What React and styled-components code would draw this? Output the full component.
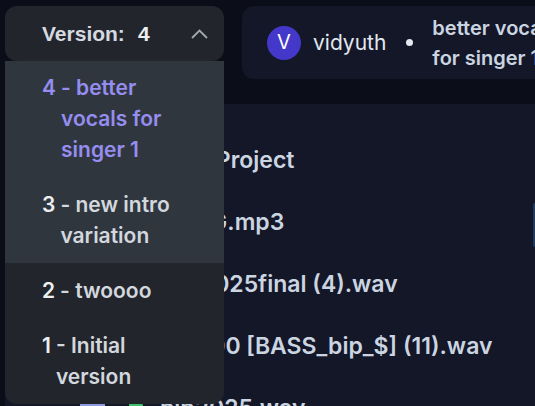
import React, { useState } from "react";
import styled, { createGlobalStyle } from "styled-components";

const GlobalStyle = createGlobalStyle`
  * {
    box-sizing: border-box;
  }
  body {
    margin: 0;
    height: 100vh;
    overflow: hidden;
    background: #0b0d18;
    color: #cbd5e1;
    font-family: Inter, "Liberation Sans", sans-serif;
  }
`;

const Page = styled.div`
  padding: 6px 0 0 5px;
`;

const TopBar = styled.header`
  display: flex;
  align-items: flex-start;
  gap: 18px;
  height: 98px;
`;

const VersionPicker = styled.div`
  position: relative;
  flex: 0 0 219px;
`;

const VersionButton = styled.button`
  display: flex;
  align-items: center;
  width: 100%;
  height: 55px;
  padding: 0 16px 0 37px;
  border: none;
  border-radius: 12px;
  background: #22262c;
  color: #d5dae1;
  font-family: "Liberation Sans", sans-serif;
  font-size: 21px;
  font-weight: 700;
  cursor: pointer;
`;

const VersionNumber = styled.span`
  margin-left: 13px;
  color: #eceef1;
`;

const Chevron = styled.svg`
  width: 17px;
  height: 10px;
  margin-left: auto;
`;

const VersionMenu = styled.ul`
  position: absolute;
  top: 100%;
  left: 0;
  z-index: 1;
  width: 100%;
  margin: 0;
  padding: 0;
  overflow: hidden;
  border-radius: 0 0 12px 12px;
  background: #22262c;
  list-style: none;
`;

const VersionOption = styled.button`
  display: flex;
  width: 100%;
  padding: 12px 40px 12px 37px;
  border: none;
  background: ${(props) => (props.$highlighted ? "#30363d" : "transparent")};
  color: ${(props) => (props.$current ? "#958df0" : "#d3d7de")};
  font-family: inherit;
  font-size: 21px;
  font-weight: 600;
  line-height: 31px;
  text-align: left;
  cursor: pointer;

  li:first-child > & {
    padding-top: 11px;
  }
`;

const OptionNumber = styled.span`
  color: ${(props) => (props.$current ? "inherit" : "#eceef1")};
`;

const OptionLabel = styled.span`
  padding-left: 5px;
`;

const CommitCard = styled.section`
  display: flex;
  flex: 1;
  align-items: center;
  min-width: 0;
  height: 73px;
  padding-left: 25px;
  overflow: hidden;
  border-radius: 12px 0 0 12px;
  background: #141727;
  white-space: nowrap;
`;

const Avatar = styled.span`
  flex: none;
  width: 34px;
  height: 34px;
  border-radius: 50%;
  background: #4338ca;
  color: #ffffff;
  font-size: 20px;
  line-height: 33px;
  text-align: center;
`;

const UserName = styled.span`
  margin-left: 12px;
  color: #e2e8f0;
  font-size: 21px;
`;

const Dot = styled.span`
  flex: none;
  width: 7px;
  height: 7px;
  margin: 0 19px 0 20px;
  border-radius: 50%;
  background: #e2e8f0;
`;

const CommitMessage = styled.p`
  margin: 0;
  font-size: 20px;
  font-weight: 600;
  line-height: 30px;
`;

const FilePanel = styled.main`
  display: flex;
  padding-top: 25px;
  background: #141727;
`;

const FileList = styled.ul`
  flex: 1;
  margin: 0;
  padding: 0 0 0 75px;
  list-style: none;
`;

const FileRow = styled.li`
  display: flex;
  align-items: center;
  height: 62px;
  font-size: 23px;
  font-weight: 600;
  white-space: nowrap;
`;

const ColorTag = styled.svg`
  flex: none;
  width: 25px;
  height: 14px;
  margin-right: 24px;
`;

const FileIcon = styled.svg`
  flex: none;
  width: 24px;
  height: 14px;
  margin-right: 7px;
`;

const SideBox = styled.aside`
  width: 2px;
  height: 44px;
  margin-top: 74px;
  border-radius: 8px 0 0 8px;
  background: #1e3a5f;
`;

const versions = [
  { number: 4, label: "better vocals for singer 1" },
  { number: 3, label: "new intro variation" },
  { number: 2, label: "twoooo" },
  { number: 1, label: "Initial version" },
];

const files = [
  "New Project",
  "SONG.mp3",
  "mix2025final (4).wav",
  "m2000 [BASS_bip_$] (11).wav",
  "bip2025.wav",
];

const App = () => {
  const [open, setOpen] = useState(true);
  const [current, setCurrent] = useState(4);

  return (
    <>
      <GlobalStyle />
      <Page>
        <TopBar>
          <VersionPicker>
            <VersionButton aria-expanded={open} onClick={() => setOpen(!open)}>
              Version:<VersionNumber>{current}</VersionNumber>
              <Chevron viewBox="0 0 17 10" aria-hidden="true">
                <path
                  d="M1 9 8.500 1.500 16 9"
                  fill="none"
                  stroke="#a3a8b0"
                  strokeWidth="1.800"
                />
              </Chevron>
            </VersionButton>
            {open && (
              <VersionMenu>
                {versions.map(({ number, label }) => (
                  <li key={number}>
                    <VersionOption
                      $current={number === current}
                      $highlighted={number > 2}
                      onClick={() => setCurrent(number)}
                    >
                      <OptionNumber $current={number === current}>
                        {number}
                      </OptionNumber>
                      <OptionLabel>- {label}</OptionLabel>
                    </VersionOption>
                  </li>
                ))}
              </VersionMenu>
            )}
          </VersionPicker>
          <CommitCard>
            <Avatar>V</Avatar>
            <UserName>vidyuth</UserName>
            <Dot />
            <CommitMessage>
              better vocals
              <br />
              for singer 1
            </CommitMessage>
          </CommitCard>
        </TopBar>
        <FilePanel>
          <FileList>
            {files.map((name) => (
              <FileRow key={name}>
                <ColorTag viewBox="0 0 25 14" aria-hidden="true">
                  <rect width="25" height="14" fill="#8f9be0" />
                </ColorTag>
                <FileIcon viewBox="0 0 24 14" aria-hidden="true">
                  <path d="M0 0h11l3 4v10H0z" fill="#3fbf68" />
                </FileIcon>
                {name}
              </FileRow>
            ))}
          </FileList>
          <SideBox />
        </FilePanel>
      </Page>
    </>
  );
};

export default App;
